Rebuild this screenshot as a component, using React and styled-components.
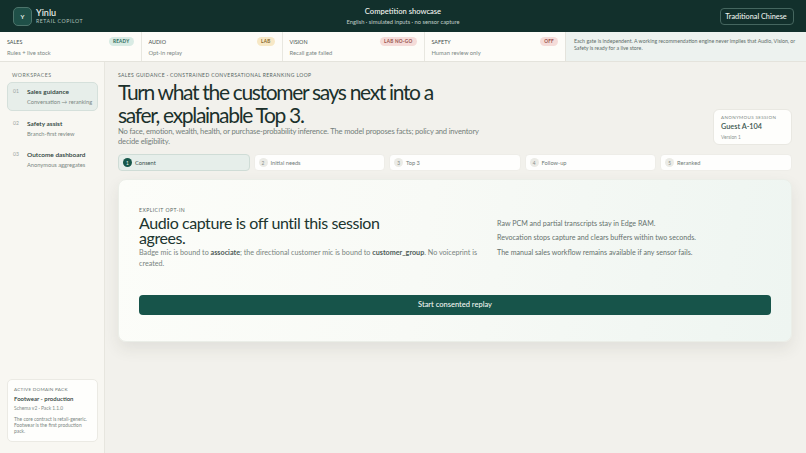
import React from "react";
import styled, { createGlobalStyle } from "styled-components";

const Global = createGlobalStyle`
  html, body { margin: 0; padding: 0; background: #f2f1ec; }
  * { box-sizing: border-box; }
  body { font-family: "Lato", "Open Sans", sans-serif; color: #1c2f2b; }
`;
const Page = styled.div`width: 806px; height: 453px; overflow: hidden; display: flex; flex-direction: column;`;
const Header = styled.header`height: 32px; flex: none; background: #12302c; display: grid; grid-template-columns: 1fr auto 1fr; align-items: center; padding: 0 13px; color: #f4f6f1;`;
const Brand = styled.div`display: flex; align-items: center; gap: 4px;`;
const Logo = styled.div`width: 19px; height: 19px; border-radius: 5px; background: #1f5048; border: 1px solid #4d746b; display: grid; place-items: center; font-size: 6px; font-weight: 700; color: #e8efe6;`;
const BrandText = styled.div`display: flex; flex-direction: column;`;
const BrandName = styled.span`font-size: 9px; font-weight: 500; line-height: 11px;`;
const BrandSub = styled.span`font-size: 5.2px; letter-spacing: .55px; line-height: 7px; color: #b3c3bd;`;
const Center = styled.div`text-align: center;`;
const CenterTitle = styled.div`font-size: 7.6px; font-weight: 500; line-height: 11px;`;
const CenterSub = styled.div`font-size: 5.75px; line-height: 10px; color: #c0cfc9;`;
const Lang = styled.button`justify-self: end; height: 17px; width: 74px; margin-right: -1px; border: 1px solid #45665f; border-radius: 4px; background: transparent; color: #eef2ec; font: 500 7.3px "Lato", sans-serif; padding: 0 2px 0 0;`;
const Gates = styled.section`height: 30px; flex: none; display: grid; grid-template-columns: 141.5px 141px 142px 141.5px 1fr; background: #fdfcf8; border-bottom: 1px solid #e4e3dc;`;
const Gate = styled.div`padding: 4px 7px 0; border-right: 1px solid #e8e7e0;`;
const GateTop = styled.div`display: flex; align-items: center; justify-content: space-between; height: 11px;`;
const GateName = styled.span`font-size: 5.4px; color: #3f4f4b;`;
const Pill = styled.span`height: 9px; padding: 0 4px; border-radius: 5px; font-size: 4.7px; font-weight: 700; letter-spacing: .25px; line-height: 9px; background: ${p => p.$bg}; color: ${p => p.$fg};`;
const GateSub = styled.div`font-size: 5.8px; line-height: 9px; margin-top: 1px; color: #7b8783;`;
const GateNote = styled.div`background: #edf2ef; padding: 6px 8px; font-size: 5.25px; line-height: 7.3px; color: #5e6d69; border-left: 1px solid #e4e3dc; margin-left: -1px;`;
const Body = styled.div`flex: 1; min-height: 0; display: flex;`;
const Side = styled.aside`width: 105px; flex: none; background: #f8f7f2; border-right: 1px solid #e7e6df; padding: 10px 6px 11px 7px; display: flex; flex-direction: column;`;
const SideLabel = styled.div`font-size: 5.2px; letter-spacing: .5px; color: #68756f; padding: 0 5px; line-height: 7px; margin-bottom: 3px;`;
const NavItem = styled.div`display: flex; height: 29px; margin-bottom: 2.6px; padding: 4px 5px; gap: 9px; border-radius: 5px; border: 1px solid ${p => p.$on ? "#d5e0db" : "transparent"}; background: ${p => p.$on ? "#e7eeea" : "transparent"};`;
const NavNum = styled.span`font-size: 5px; line-height: 9px; color: #9aa49f; width: 5px;`;
const NavBody = styled.div`display: flex; flex-direction: column; white-space: nowrap;`;
const NavTitle = styled.span`font-size: 6.5px; font-weight: 600; line-height: 10px; color: #293c37;`;
const NavSub = styled.span`font-size: 5.7px; line-height: 9px; color: #7b8783;`;
const Pack = styled.div`margin-top: auto; background: #fefefc; border: 1px solid #ebeae4; border-radius: 5px; padding: 6px 6px; height: 63px;`;
const PackLabel = styled.div`font-size: 4.6px; letter-spacing: .25px; line-height: 7px; color: #6f7a76;`;
const PackTitle = styled.div`font-size: 6px; font-weight: 600; line-height: 9px; margin-top: 1px; color: #2c3c38;`;
const PackMeta = styled.div`font-size: 4.9px; line-height: 8px; margin-top: 1px; color: #818c88;`;
const PackText = styled.div`font-size: 4.9px; line-height: 6.2px; margin-top: 4px; color: #7b8783;`;
const Main = styled.main`flex: 1; min-width: 0; padding: 10px 14px 0 13px; display: flex; flex-direction: column;`;
const Hero = styled.div`display: flex; justify-content: space-between; align-items: flex-end; height: 73px;`;
const HeroText = styled.div`width: 370px; align-self: flex-start;`;
const Eyebrow = styled.div`font-size: 5px; letter-spacing: .4px; line-height: 7px; color: #53635e; white-space: nowrap;`;
const H1 = styled.h1`margin: 1px 0 0; font-size: 21px; font-weight: 400; line-height: 23px; letter-spacing: -1.33px; color: #1b302b; white-space: nowrap;`;
const Lead = styled.p`margin: 0; font-size: 7.6px; line-height: 10px; letter-spacing: -.18px; color: #747f7b; width: 372px;`;
const Session = styled.div`width: 79px; height: 36px; background: #fefefc; border: 1px solid #e9e8e2; border-radius: 6px; padding: 4px 7px;`;
const SessionLabel = styled.div`font-size: 4.5px; letter-spacing: .35px; line-height: 7px; color: #808a86;`;
const SessionName = styled.div`font-size: 7.3px; font-weight: 600; line-height: 12px; color: #3b5750;`;
const SessionMeta = styled.div`font-size: 4.8px; line-height: 7px; margin-top: 1px; color: #8b9591;`;
const Steps = styled.nav`display: grid; grid-template-columns: repeat(5, 1fr); gap: 3.6px; margin-top: 9px;`;
const Step = styled.div`height: 17px; display: flex; align-items: center; gap: 3px; padding: 0 4px; border-radius: 4px; font-size: 5.7px; border: 1px solid ${p => p.$on ? "#cfdcd6" : "#eeede8"}; background: ${p => p.$on ? "#e6eeea" : "#fefefd"}; color: ${p => p.$on ? "#36504a" : "#717c78"};`;
const StepNum = styled.span`width: 9px; height: 9px; border-radius: 50%; display: grid; place-items: center; font-size: 4.8px; background: ${p => p.$on ? "#17574a" : "#ebebe6"}; color: ${p => p.$on ? "#f1f5f1" : "#838c88"};`;
const Card = styled.section`margin-top: 8px; height: 163px; border-radius: 8px; border: 1px solid #ebeee8; background: linear-gradient(100deg, #fcfdf9 0%, #f8faf6 45%, #eef5f1 100%); box-shadow: 0 7px 16px rgba(60, 60, 45, .09); padding: 27px 20px 0 20px;`;
const CardGrid = styled.div`display: grid; grid-template-columns: 341px 1fr; column-gap: 17px; height: 79.5px;`;
const CardEyebrow = styled.div`font-size: 5.1px; letter-spacing: .45px; line-height: 7px; color: #5c6a66;`;
const H2 = styled.h2`margin: 1px 0 3px; font-size: 16px; font-weight: 400; line-height: 15px; letter-spacing: -.43px; color: #20352f; width: 270px;`;
const CardText = styled.p`margin: 0; font-size: 7.2px; line-height: 10.5px; color: #79847f; & b { font-weight: 700; color: #4f5d59; }`;
const Facts = styled.div`display: flex; flex-direction: column; gap: 4px; padding-top: 11.5px;`;
const Fact = styled.p`margin: 0; font-size: 7.1px; line-height: 10.5px; color: #66726e; white-space: nowrap;`;
const Primary = styled.button`display: block; width: 100%; height: 19.5px; margin-top: 8.5px; border: 0; border-radius: 4px; background: #17544a; color: #f1f5f0; font: 500 7.5px "Lato", sans-serif;`;

const gates = [
  ["SALES", "READY", "Rules + live stock", "#d9ebe4", "#2f6b5c"],
  ["AUDIO", "LAB", "Opt-in replay", "#f7e8c6", "#86662a"],
  ["VISION", "LAB NO-GO", "Recall gate failed", "#f5dcd9", "#98504b"],
  ["SAFETY", "OFF", "Human review only", "#f5dcd9", "#98504b"],
];
const nav = [["01", "Sales guidance", "Conversation → reranking", true], ["02", "Safety assist", "Branch-first review"], ["03", "Outcome dashboard", "Anonymous aggregates"]];
const steps = ["Consent", "Initial needs", "Top 3", "Follow-up", "Reranked"];

export default function App() {
  return (
    <Page>
      <Global />
      <Header>
        <Brand>
          <Logo>Y</Logo>
          <BrandText><BrandName>Yinlu</BrandName><BrandSub>RETAIL COPILOT</BrandSub></BrandText>
        </Brand>
        <Center>
          <CenterTitle>Competition showcase</CenterTitle>
          <CenterSub>English · simulated inputs · no sensor capture</CenterSub>
        </Center>
        <Lang>Traditional Chinese</Lang>
      </Header>
      <Gates>
        {gates.map(([n, s, d, bg, fg]) => (
          <Gate key={n}>
            <GateTop><GateName>{n}</GateName><Pill $bg={bg} $fg={fg}>{s}</Pill></GateTop>
            <GateSub>{d}</GateSub>
          </Gate>
        ))}
        <GateNote>Each gate is independent. A working recommendation engine never implies that Audio, Vision, or Safety is ready for a live store.</GateNote>
      </Gates>
      <Body>
        <Side>
          <SideLabel>WORKSPACES</SideLabel>
          {nav.map(([n, t, s, on]) => (
            <NavItem key={n} $on={on}>
              <NavNum>{n}</NavNum>
              <NavBody><NavTitle>{t}</NavTitle><NavSub>{s}</NavSub></NavBody>
            </NavItem>
          ))}
          <Pack>
            <PackLabel>ACTIVE DOMAIN PACK</PackLabel>
            <PackTitle>Footwear - production</PackTitle>
            <PackMeta>Schema v2 · Pack 1.1.0</PackMeta>
            <PackText>The core contract is retail-generic. Footwear is the first production pack.</PackText>
          </Pack>
        </Side>
        <Main>
          <Hero>
            <HeroText>
              <Eyebrow>SALES GUIDANCE · CONSTRAINED CONVERSATIONAL RERANKING LOOP</Eyebrow>
              <H1>Turn what the customer says next into a<br />safer, explainable Top 3.</H1>
              <Lead>No face, emotion, wealth, health, or purchase-probability inference. The model proposes facts; policy and inventory decide eligibility.</Lead>
            </HeroText>
            <Session>
              <SessionLabel>ANONYMOUS SESSION</SessionLabel>
              <SessionName>Guest A-104</SessionName>
              <SessionMeta>Version 1</SessionMeta>
            </Session>
          </Hero>
          <Steps>
            {steps.map((s, i) => (
              <Step key={s} $on={i === 0}><StepNum $on={i === 0}>{i + 1}</StepNum>{s}</Step>
            ))}
          </Steps>
          <Card>
            <CardGrid>
              <div>
                <CardEyebrow>EXPLICIT OPT-IN</CardEyebrow>
                <H2>Audio capture is off until this session agrees.</H2>
                <CardText>Badge mic is bound to <b>associate</b>; the directional customer mic is bound to <b>customer_group</b>. No voiceprint is created.</CardText>
              </div>
              <Facts>
                <Fact>Raw PCM and partial transcripts stay in Edge RAM.</Fact>
                <Fact>Revocation stops capture and clears buffers within two seconds.</Fact>
                <Fact>The manual sales workflow remains available if any sensor fails.</Fact>
              </Facts>
            </CardGrid>
            <Primary>Start consented replay</Primary>
          </Card>
        </Main>
      </Body>
    </Page>
  );
}
